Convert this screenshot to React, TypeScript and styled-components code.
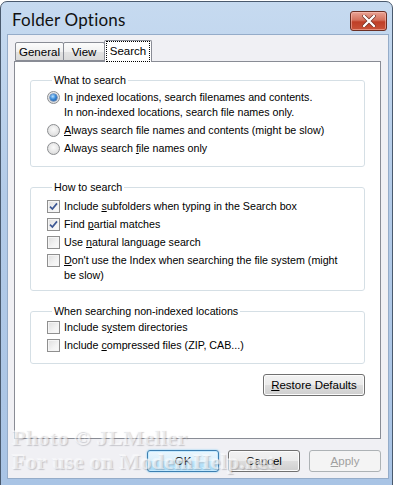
import React from "react";
import styled, { createGlobalStyle } from "styled-components";

const GlobalStyle = createGlobalStyle`
  html, body {
    margin: 0;
    padding: 0;
    background: #ffffff;
  }
  body {
    font-family: "Liberation Sans", Arial, sans-serif;
    font-size: 10.7px;
    color: #000;
  }
`;

const Window = styled.div`
  position: relative;
  box-sizing: border-box;
  width: 393px;
  height: 485px;
  margin-top: 1px;
  border: 1px solid #4a5a6e;
  border-radius: 7px 7px 0 0;
  background: linear-gradient(180deg, #c6daf0 0%, #b3cbe8 40%, #a9c4e5 100%);
  padding: 0 3px 6px 6px;
  display: flex;
  flex-direction: column;
  overflow: hidden;
`;

const TitleBar = styled.div`
  height: 32px;
  display: flex;
  align-items: center;
  justify-content: space-between;
`;

const Title = styled.div`
  font-family: "Lato", "Noto Sans", sans-serif;
  font-size: 17px;
  color: #111;
  padding-left: 5px;
  padding-top: 2px;
  letter-spacing: 0.2px;
`;

const CloseButton = styled.div`
  width: 37px;
  height: 20px;
  box-sizing: border-box;
  margin-right: 2px;
  margin-top: 5px;
  border: 1px solid #6b2f24;
  border-radius: 3px;
  background: linear-gradient(180deg, #e9a395 0%, #d4715c 45%, #bf3f27 55%, #c9533a 100%);
  box-shadow: inset 0 0 0 1px rgba(255, 200, 190, 0.5);
  display: flex;
  align-items: center;
  justify-content: center;
`;

const Client = styled.div`
  flex: 1;
  display: flex;
  flex-direction: column;
  background: #f0f0f4;
  border: 1px solid #95acc9;
  padding: 5px 7px 6px 6px;
`;

const TabRow = styled.div`
  display: flex;
  align-items: flex-end;
  height: 21px;
  padding-left: 1px;
  position: relative;
  z-index: 1;
`;

const Tab = styled.div<{ $active?: boolean; $w: number }>`
  box-sizing: border-box;
  width: ${(p) => p.$w}px;
  height: ${(p) => (p.$active ? 22 : 19)}px;
  margin-bottom: ${(p) => (p.$active ? -1 : 0)}px;
  border: 1px solid #898c95;
  border-bottom: ${(p) => (p.$active ? "none" : "1px solid #898c95")};
  border-radius: 2px 2px 0 0;
  background: ${(p) =>
    p.$active
      ? "#ffffff"
      : "linear-gradient(180deg, #fcfcfc 0%, #f1f1f1 50%, #e2e2e2 55%, #dadada 100%)"};
  display: flex;
  align-items: center;
  justify-content: center;
  font-size: 11.5px;
  color: #000;
  & + & {
    margin-left: ${(p) => (p.$active ? -1 : 1)}px;
  }
`;

const FocusText = styled.span`
  outline: 1px dotted #000;
  outline-offset: 0;
  padding: 3px 3px 4px;
  margin-top: -1px;
`;

const Panel = styled.div`
  flex: 1;
  background: #ffffff;
  border: 1px solid #898c95;
  padding: 11px 15px 0 15px;
  display: flex;
  flex-direction: column;
`;

const Group = styled.fieldset<{ $top?: number; $bottom?: number }>`
  margin: 0 0 13px 0;
  padding: ${(p) => p.$top ?? 3}px 0 ${(p) => p.$bottom ?? 10}px 16px;
  border: 1px solid #d5dfe5;
  border-radius: 3px;
  display: flex;
  flex-direction: column;
  gap: 3px;
  min-width: 0;
`;

const Legend = styled.legend`
  padding: 0 2px;
  margin-left: 5px;
  line-height: 14px;
  font-size: 10.7px;
  color: #000;
`;

const Option = styled.label`
  display: flex;
  align-items: flex-start;
  gap: 4px;
  line-height: 15px;
  font-size: 10.7px;
  padding-right: 18px;
`;

const Radio = styled.span<{ $checked?: boolean }>`
  flex: none;
  box-sizing: border-box;
  width: 13px;
  height: 13px;
  margin-top: 1px;
  border-radius: 50%;
  border: 1px solid #8b8d90;
  background: radial-gradient(circle at 50% 40%, #fafafa 0%, #e6e6e6 55%, #cfcfcf 100%);
  display: flex;
  align-items: center;
  justify-content: center;
  &::after {
    content: "";
    display: ${(p) => (p.$checked ? "block" : "none")};
    width: 7px;
    height: 7px;
    border-radius: 50%;
    background: radial-gradient(circle at 40% 35%, #b8e2ff 0%, #3b8ad8 45%, #174a8f 100%);
    box-shadow: 0 0 0 0.5px #2a5a9a;
  }
`;

const Check = styled.span`
  flex: none;
  box-sizing: border-box;
  width: 13px;
  height: 13px;
  margin-top: 1px;
  border: 1px solid #8f8f8f;
  background: linear-gradient(135deg, #dedede 0%, #f3f3f3 60%, #fafafa 100%);
  box-shadow: inset 0 0 0 1px #f5f5f5;
  display: flex;
  align-items: center;
  justify-content: center;
`;

const Key = styled.span`
  text-decoration: underline;
`;

const RestoreRow = styled.div`
  display: flex;
  justify-content: flex-end;
  margin-top: -3px;
`;

const Button = styled.div<{ $variant?: "default" | "disabled" | "normal"; $w?: number }>`
  box-sizing: border-box;
  width: ${(p) => p.$w ?? 72}px;
  height: 22px;
  border-radius: 3px;
  border: 1px solid
    ${(p) =>
      p.$variant === "default" ? "#3c7fb1" : p.$variant === "disabled" ? "#adb2b5" : "#707070"};
  background: ${(p) =>
    p.$variant === "default"
      ? "linear-gradient(180deg, #eaf6fd 0%, #d9f0fc 50%, #bee6fd 52%, #a7d9f5 100%)"
      : p.$variant === "disabled"
      ? "#f4f4f4"
      : "linear-gradient(180deg, #f2f2f2 0%, #ebebeb 50%, #dddddd 52%, #cfcfcf 100%)"};
  box-shadow: ${(p) =>
    p.$variant === "disabled"
      ? "none"
      : p.$variant === "default"
      ? "inset 0 0 0 1px #c5eaff, 0 0 2px #6fc4f4"
      : "inset 0 0 0 1px #fcfcfc"};
  color: ${(p) => (p.$variant === "disabled" ? "#a0a0a0" : "#000")};
  display: flex;
  align-items: center;
  justify-content: center;
  font-size: 11.5px;
`;

const ButtonRow = styled.div`
  display: flex;
  justify-content: flex-end;
  gap: 9px;
  margin-top: 11px;
`;

// photo watermark laid over the bottom of the dialog
const Watermark = styled.div`
  position: absolute;
  left: 11px;
  top: 424px;
  font-family: "Liberation Serif", "DejaVu Serif", serif;
  font-weight: bold;
  font-size: 22px;
  line-height: 24px;
  letter-spacing: 0.3px;
  color: rgba(255, 255, 255, 0.55);
  text-shadow: 1px 1px 1px rgba(120, 120, 130, 0.35), -1px -1px 0 rgba(255, 255, 255, 0.4);
  pointer-events: none;
  white-space: nowrap;
`;

const CheckMark = () => (
  <svg width="9" height="9" viewBox="0 0 9 9">
    <path d="M1 4.6 L3.4 7 L8 1.4" fill="none" stroke="#3d5894" strokeWidth="1.7" />
  </svg>
);

const CloseIcon = () => (
  <svg width="14" height="12" viewBox="0 0 14 12">
    <path
      d="M2 1 L12 11 M12 1 L2 11"
      stroke="#6a2a20"
      strokeWidth="3.6"
      strokeLinecap="round"
      fill="none"
    />
    <path
      d="M2 1 L12 11 M12 1 L2 11"
      stroke="#ffffff"
      strokeWidth="2.4"
      strokeLinecap="round"
      fill="none"
    />
  </svg>
);

const CheckOption = ({ checked, children }: { checked?: boolean; children: React.ReactNode }) => (
  <Option>
    <Check>{checked && <CheckMark />}</Check>
    <span>{children}</span>
  </Option>
);

const RadioOption = ({ checked, children }: { checked?: boolean; children: React.ReactNode }) => (
  <Option>
    <Radio $checked={checked} />
    <span>{children}</span>
  </Option>
);

const App = () => {
  return (
    <>
      <GlobalStyle />
      <Window>
        <TitleBar>
          <Title>Folder Options</Title>
          <CloseButton>
            <CloseIcon />
          </CloseButton>
        </TitleBar>
        <Client>
          <TabRow>
            <Tab $w={49}>General</Tab>
            <Tab $w={42}>View</Tab>
            <Tab $w={48} $active>
              <FocusText>Search</FocusText>
            </Tab>
          </TabRow>
          <Panel>
            <Group>
              <Legend>What to search</Legend>
              <RadioOption checked>
                In <Key>i</Key>ndexed locations, search filenames and contents.
                <br />
                In non-indexed locations, search file names only.
              </RadioOption>
              <RadioOption>
                <Key>A</Key>lways search file names and contents (might be slow)
              </RadioOption>
              <RadioOption>
                Always search <Key>f</Key>ile names only
              </RadioOption>
            </Group>
            <Group $top={5} $bottom={7}>
              <Legend>How to search</Legend>
              <CheckOption checked>
                Include <Key>s</Key>ubfolders when typing in the Search box
              </CheckOption>
              <CheckOption checked>
                Find <Key>p</Key>artial matches
              </CheckOption>
              <CheckOption>
                Use <Key>n</Key>atural language search
              </CheckOption>
              <CheckOption>
                <Key>D</Key>on't use the Index when searching the file system (might be slow)
              </CheckOption>
            </Group>
            <Group $top={2}>
              <Legend>When searching non-indexed locations</Legend>
              <CheckOption>
                Include s<Key>y</Key>stem directories
              </CheckOption>
              <CheckOption>
                Include <Key>c</Key>ompressed files (ZIP, CAB...)
              </CheckOption>
            </Group>
            <RestoreRow>
              <Button $w={102}>
                <Key>R</Key>estore Defaults
              </Button>
            </RestoreRow>
          </Panel>
          <ButtonRow>
            <Button $variant="default">OK</Button>
            <Button>Cancel</Button>
            <Button $variant="disabled">
              <Key>A</Key>pply
            </Button>
          </ButtonRow>
        </Client>
        <Watermark>
          Photo © JLMeller
          <br />
          For use on ModemHelp.net
        </Watermark>
      </Window>
    </>
  );
};

export default App;
